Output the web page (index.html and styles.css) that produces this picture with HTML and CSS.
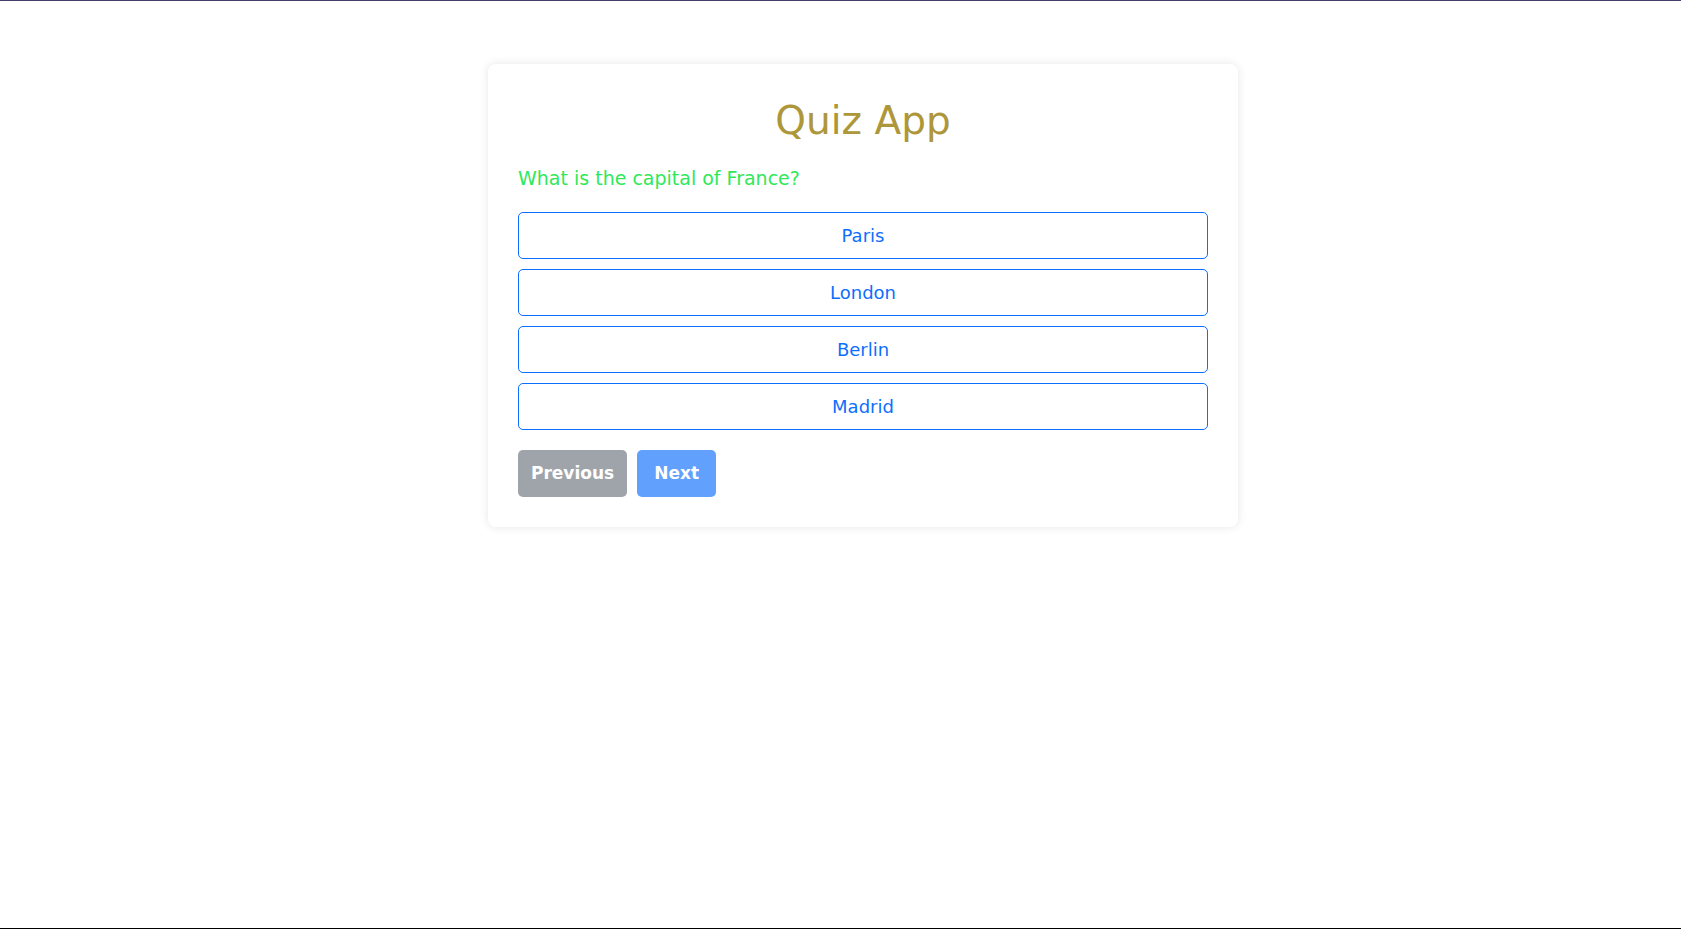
FILE: index.html
```html
<!DOCTYPE html>
<html lang="en">
<head>
<meta charset="utf-8">
<title>Quiz App</title>
<link rel="stylesheet" href="styles.css">
</head>
<body>
<div class="page">
  <div class="card">
    <h1 class="title">Quiz App</h1>
    <p class="question">What is the capital of France?</p>
    <div class="options">
      <button class="option">Paris</button>
      <button class="option">London</button>
      <button class="option">Berlin</button>
      <button class="option">Madrid</button>
    </div>
    <div class="nav">
      <button class="btn btn-prev">Previous</button>
      <button class="btn btn-next">Next</button>
    </div>
  </div>
</div>
</body>
</html>
```
FILE: styles.css
```css
html, body {
  margin: 0;
  padding: 0;
  background: #ffffff;
}
.page {
  min-height: 100vh;
  box-sizing: border-box;
  border-top: 1px solid #463c6a;
  border-bottom: 1px solid #000000;
  padding: 63px 0 0 45px;
  font-family: "DejaVu Sans", sans-serif;
}
.card {
  width: 750px;
  box-sizing: border-box;
  margin: 0 auto;
  background: #fff;
  border-radius: 8px;
  box-shadow: 0 0 10px rgba(0, 0, 0, 0.1);
  padding: 30px;
}
.title {
  margin: 0 0 16px;
  text-align: center;
  font-size: 39px;
  line-height: 54px;
  font-weight: normal;
  color: #ad973a;
}
.question {
  margin: 0 0 20px;
  font-size: 19px;
  line-height: 28px;
  color: #2fe85a;
}
.options {
  display: flex;
  flex-direction: column;
  gap: 10px;
}
.option {
  display: block;
  width: 100%;
  border: 1px solid #0d6efd;
  border-radius: 5px;
  background: #fff;
  color: #0d6efd;
  font-family: inherit;
  font-size: 18px;
  line-height: 25px;
  padding: 10px;
  text-align: center;
}
.nav {
  display: flex;
  gap: 10px;
  margin-top: 20px;
}
.btn {
  border: none;
  border-radius: 5px;
  color: #fff;
  font-family: inherit;
  font-size: 17px;
  font-weight: bold;
  line-height: 25px;
  padding: 11px 15px;
  opacity: 0.65;
}
.btn-prev { background: #6c757d; padding: 11px 13px; }
.btn-next { background: #0d6efd; padding: 11px 17px; }
```
